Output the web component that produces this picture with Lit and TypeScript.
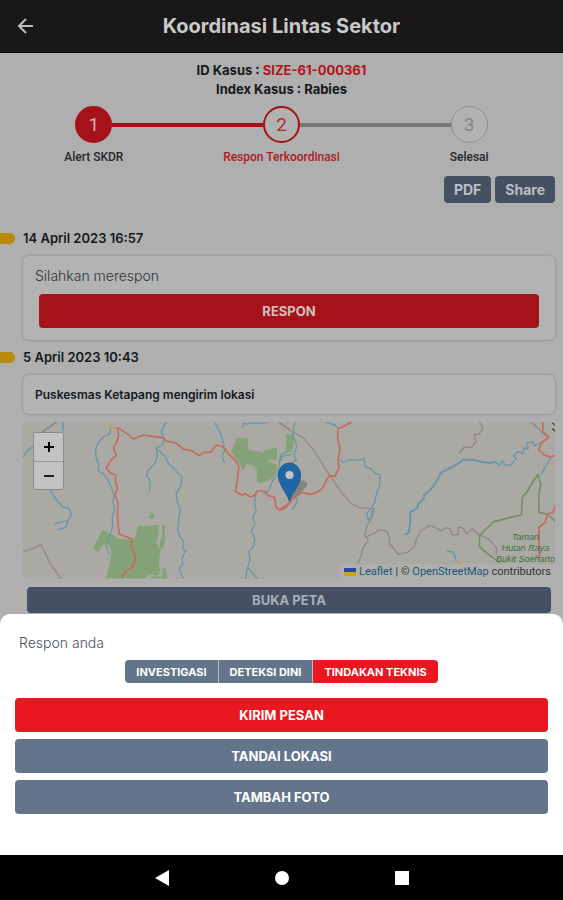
import { LitElement, html, css, svg } from "lit";
import { customElement, property, state } from "lit/decorators.js";
import { classMap } from "lit/directives/class-map.js";

const BLUE = "#6597a8";
const RED = "#c7695c";
const GREEN = "#83a277";
const GREY = "#8f8987";
const PARK = "#739068";

interface Line {
  c: string;
  d: string;
  w?: number;
}

const westLines: Line[] = [
  { c: BLUE, d: "M192 20L190 46M70 128L84 106L100 95M130 48L170 22" },
  { c: BLUE, d: "M333 40L330 58L312 66L296 84L288 104L290 128L298 150L296 168L312 176L326 196L334 214L344 240L340 262L346 284L338 306L340 330L334 352L328 376L320 392L328 416" },
  { c: BLUE, d: "M502 20L492 34L486 52L494 72L488 90L470 100L474 122L468 142L446 166L441 178L452 200L450 228" },
  { c: BLUE, d: "M476 104L496 124L508 146L528 166L548 188L544 212L530 236L534 262L542 286L538 310L534 346L540 362L552 380L550 400L558 408L548 430L550 450L540 460L550 490" },
  { c: BLUE, d: "M646 22L656 42L666 62L672 86L676 106L668 122L674 142" },
  { c: BLUE, d: "M730 38L734 24L744 28L752 22L760 27L770 22L782 26L802 22" },
  { c: BLUE, d: "M768 240L766 266L770 290L760 304L766 326L756 348L766 370L762 394L748 410L752 434L744 456L738 490M746 458L772 490" },
  { c: BLUE, d: "M152 224L164 246L190 276L208 280L216 298L206 316L166 326M206 318L198 338L176 344" },
  { c: BLUE, d: "M868 108L844 120L840 142L836 176L820 196L808 226L794 236" },
  { c: GREY, d: "M70 410L100 400L124 390L132 404L152 446L184 490" },
  { c: GREY, d: "M840 24L870 44M130 50L168 24" },
  { c: "#c59b5d", d: "M320 20L344 42L356 38", w: 5 },
  { c: RED, d: "M354 38L382 56L402 72L432 60L458 64L490 68L500 78L528 84L552 102L578 108L598 122L612 112L632 112L652 90L672 96L688 118L704 132L718 154L714 190L708 230L728 240L736 236L754 246L768 240L772 228L796 228L806 242L824 246L828 266L830 278L842 286L858 278L870 264", w: 5 },
  { c: RED, d: "M354 42L358 62L352 80L342 98L350 122L336 134L320 158L332 174L348 180L348 200L354 220L346 240L356 264L354 298L356 332L360 358L398 372L394 390L404 412L408 436L398 458L380 468L368 488", w: 5 },
];

const eastLines: Line[] = [
  { c: GREY, d: "M0 22L40 52L72 68L104 108L132 152L154 186L186 232L216 266L240 278L284 282" },
  { c: GREY, d: "M284 280L278 306L262 332L256 360L266 376L250 400L246 418L236 446M258 366L290 352L296 344L322 348L330 370L330 388L342 400L356 418L384 412L404 396L412 370L424 348L448 332L466 336L484 348L500 338L512 342L518 360L536 358L536 336L552 340L560 356L578 342L592 354L606 362L630 374L652 400L650 420" },
  { c: GREY, d: "M600 22L610 38L600 56L584 60L590 78L576 98L554 96L540 114M756 22L782 46L806 68" },
  { c: BLUE, d: "M136 20L166 30L176 40M182 132L188 142L214 134L240 136L254 130L258 156L276 162L286 176L302 180L300 214L290 240L286 262L270 286L262 296L266 314L276 306L278 288" },
  { c: BLUE, w: 6, d: "M378 358L388 352L392 326L392 292L412 280L418 266L434 250L434 238L450 228L466 208L476 190L484 174L510 160L530 150L550 134L580 134L604 140L632 144L644 140" },
  { c: BLUE, d: "M644 140L660 150L668 138L678 152L696 148L710 130L702 122L714 110L730 116L734 98L746 102L742 84L760 80L766 92L784 82M814 130L798 156L786 176M504 408L522 412L530 438" },
  { c: BLUE, d: "M46 22L40 60L52 92L44 120L50 136L28 150M0 138L10 124L36 118M54 250L48 270L38 284" },
  { c: PARK, w: 5, d: "M776 178L760 200L744 228L728 250L726 300L690 308L644 320L620 342L600 362L600 394L614 408L640 428L660 442M776 178L784 210L778 240L778 292L804 298L828 318" },
  { c: RED, w: 5, d: "M218 20L196 32L176 42L174 70L182 102L176 130L178 160L166 184L150 182L140 196L132 216L116 230L94 238L66 232L48 246L24 268L0 284" },
  { c: RED, w: 5, d: "M790 20L790 50L808 66L786 84L778 104L794 120L812 126L826 122M828 270L820 292L804 298L796 324L778 336L780 430" },
  { c: "#4a4846", w: 5, d: "M820 24L826 30M820 42L826 48" },
];

const drawLines = (lines: Line[]) =>
  lines.map((l) => svg`<path d=${l.d} stroke=${l.c} stroke-width=${l.w ?? 4} fill="none" stroke-linejoin="round" stroke-linecap="round"/>`);

@customElement("case-steps")
class CaseSteps extends LitElement {
  @property({ type: Number }) current = 2;
  @property({ attribute: false }) steps: string[] = [];

  static styles = css`
    :host { display: block; }
    .steps { display: grid; grid-template-columns: repeat(3, 1fr); list-style: none; margin: 0; padding: 0; font-family: Roboto, "Liberation Sans", sans-serif; }
    .step { display: flex; flex-direction: column; align-items: center; gap: 6px; font-size: 12px; line-height: 16px; color: #25282b; font-weight: 500; }
    .rail { display: flex; align-items: center; align-self: stretch; }
    .bar { flex: 1; height: 4px; }
    .done { background: #a50f16; }
    .todo { background: #777; }
    .dot { box-sizing: border-box; width: 37px; height: 37px; border-radius: 50%; border: 2px solid #a51219; background: #b2b2b2; display: grid; place-items: center; font-size: 19px; font-weight: 400; color: #b02a30; }
    .past .dot { background: #a51219; color: #c8b6b6; }
    .next .dot { border: 1px solid #8e8e8e; color: #858585; }
    .now { color: #ad1a24; }
  `;

  render() {
    const last = this.steps.length;
    return html`<ol class="steps">
      ${this.steps.map((label, i) => {
        const n = i + 1;
        const bar = (shown: boolean, done: boolean) => html`<span class=${classMap({ bar: true, done: shown && done, todo: shown && !done })}></span>`;
        return html`<li class=${classMap({ step: true, past: n < this.current, now: n === this.current, next: n > this.current })}>
          <div class="rail">
            ${bar(n > 1, n <= this.current)}<span class="dot">${n}</span>${bar(n < last, n < this.current)}
          </div>
          <span>${label}</span>
        </li>`;
      })}
    </ol>`;
  }
}

@customElement("case-map")
class CaseMap extends LitElement {
  static styles = css`
    :host { display: block; position: relative; height: 157px; overflow: hidden; border-radius: 4px; background: #aba9a4; }
    .canvas { display: block; width: 100%; height: 100%; }
    .place { font: italic 9px "Liberation Sans", sans-serif; fill: #35713a; }
    .zoom { position: absolute; top: 10px; left: 10px; display: flex; flex-direction: column; border: 1px solid #8a8a88; border-radius: 3px; overflow: hidden; }
    .zoom button { width: 29px; height: 28px; border: 0; padding: 0; background: #c2c2c2; display: grid; place-items: center; }
    .zoom button + button { border-top: 1px solid #999; }
    .credit { position: absolute; right: 0; bottom: 0; display: flex; align-items: center; gap: 3px; padding: 0 4px; background: #b0afad; font: 11px/15px Roboto, sans-serif; color: #333; white-space: nowrap; }
    a { color: #18577a; text-decoration: none; }
    .leaflet { display: flex; align-items: center; gap: 3px; }
  `;

  render() {
    return html`
      <svg class="canvas" viewBox="0 0 533 157" preserveAspectRatio="xMidYMid slice" role="img" aria-label="Peta lokasi">
        <g transform="translate(-23 -7) scale(.3333)">
          <g fill=${GREEN}>
            <path d="M712 70L744 70L746 104L790 112L806 102L832 98L832 134L800 136L832 150L832 170L820 190L784 206L772 198L772 164L760 150L740 148L732 166L716 140L694 110Z"/>
            <path d="M862 62L878 56L878 112L862 108Z"/>
            <path d="M416 334L476 330L478 354L470 384L484 408L478 440L482 474L474 482L446 478L440 484L410 470L404 430L404 374Z"/>
            <path d="M310 344L344 362L360 372L404 374L410 470L440 484L440 490L320 490L330 450L336 410L328 386L310 390L296 412L280 400Z"/>
            <path d="M488 330L496 330L496 382L490 400L480 404L482 378L488 368ZM490 460L498 462L504 490L454 490L456 484L488 484ZM456 292L464 296L462 314L446 308Z"/>
          </g>
          ${drawLines(westLines)}
        </g>
        <g transform="translate(257 -7) scale(.3333)">
          <path d="M20 58L44 60L40 104L20 110Z" fill=${GREEN}/>
          ${drawLines(eastLines)}
          <path d="M530 440L548 446" stroke="#c59b5d" stroke-width="5"/>
        </g>
        <g class="place" text-anchor="middle">
          <text x="503" y="118">Taman</text>
          <text x="503" y="129">Hutan Raya</text>
          <text x="503" y="140">Bukit Soeharto</text>
        </g>
        <path d="M268 78L284 65Q287 59 278 58Z" fill="#333" opacity=".3"/>
        <path d="M267 79C264 70 256 63 256 53A11 12 0 0 1 278 53C278 63 270 70 267 79Z" fill="#1e66a4" stroke="#1b588c"/>
        <circle cx="267" cy="53" r="4" fill="#c4c4c4"/>
      </svg>
      <div class="zoom">
        <button type="button" aria-label="Perbesar"><svg width="10" height="10"><path d="M5 0V10M0 5H10" stroke="#000" stroke-width="2"/></svg></button>
        <button type="button" aria-label="Perkecil"><svg width="10" height="10"><path d="M0 5H10" stroke="#222" stroke-width="2"/></svg></button>
      </div>
      <div class="credit">
        <a class="leaflet" href="#leaflet"><svg width="12" height="8"><path d="M0 0H12V4H0Z" fill="#2749a5"/><path d="M0 4H12V8H0Z" fill="#c4a800"/></svg>Leaflet</a>
        <span>| © <a href="#osm">OpenStreetMap</a> contributors</span>
      </div>`;
  }
}

@customElement("app-root")
class AppRoot extends LitElement {
  @state() private kind = "TINDAKAN TEKNIS";

  static styles = css`
    :host { display: flex; flex-direction: column; min-height: 100vh; font-family: Inter, "Open Sans", sans-serif; font-size: 13px; background: #000; }
    button { font: inherit; font-weight: 700; border: 0; margin: 0; padding: 0; cursor: pointer; }
    .screen { flex: 1; position: relative; overflow: hidden; background: #afafaf; color: #14181c; }
    .top { display: grid; grid-template-columns: 52px 1fr 52px; align-items: center; height: 52px; background: #191718; border-bottom: 1px solid #000; }
    .back { display: grid; place-items: center; height: 52px; background: none; }
    .title { margin: 0; font-size: 20px; line-height: 24px; font-weight: 700; text-align: center; color: #c9c9c9; }
    .case { padding: 8px 0 7px; text-align: center; font-weight: 700; line-height: 19px; }
    .case p { margin: 0; }
    .id { color: #b3121c; }
    .tools { display: flex; justify-content: flex-end; gap: 4px; padding: 11px 8px 0; }
    .tools button { height: 27px; padding: 0 10px; border-radius: 4px; font-size: 14px; background: #455162; color: #b9c0c9; }
    .log { padding: 26px 8px 0 0; }
    .when { display: flex; align-items: center; gap: 8px; margin: 0; font-size: 13px; line-height: 19px; font-weight: 600; }
    .when::before { content: ""; width: 15px; height: 11px; border-radius: 0 5px 5px 0; background: #b98a0c; }
    .entry { margin: 8px 0 8px 23px; }
    .card { border-radius: 6px; background: #b3b3b3; box-shadow: 0 0 3px #7d8484; }
    .ask { padding: 10px 16px 12px; }
    .ask p { margin: 0 0 8px -4px; font-size: 14px; line-height: 20px; font-weight: 300; color: #2f3338; }
    .wide { display: block; width: 100%; height: 34px; border-radius: 4px; }
    .ask .wide { background: #a51219; color: #cfc0c0; }
    .note { margin-bottom: 8px; padding: 0 12px; font-size: 12px; line-height: 39px; font-weight: 600; }
    .open { padding: 8px 4px 0; }
    .open .wide { height: 26px; background: #455162; color: #a9b0ba; }
    .sheet { position: absolute; left: 0; right: 0; bottom: 0; box-sizing: border-box; padding: 19px 15px 41px; border-radius: 10px 10px 0 0; background: #fff; color: #4a4f57; }
    .sheet h2 { margin: 0 4px 7px; font-size: 14px; line-height: 20px; font-weight: 300; }
    .kinds { display: flex; justify-content: center; margin-bottom: 15px; }
    .kinds button { height: 23px; padding: 0 11px; font-size: 11px; color: #fff; background: #64748b; }
    .kinds button + button { border-left: 1px solid #b4bcc8; }
    .kinds button:first-child { border-radius: 4px 0 0 4px; }
    .kinds button:last-child { border-radius: 0 4px 4px 0; }
    .kinds .on { background: #e91720; }
    .acts { display: flex; flex-direction: column; gap: 7px; }
    .acts .wide { background: #64748b; color: #fff; }
    .acts .main { background: #e91720; }
    .nav { display: flex; justify-content: center; height: 45px; background: #000; }
    .nav button { width: 120px; display: grid; place-items: center; background: none; }
  `;

  render() {
    const kinds = ["INVESTIGASI", "DETEKSI DINI", "TINDAKAN TEKNIS"];
    return html`
      <div class="screen">
        <header class="top">
          <button class="back" type="button" aria-label="Kembali">
            <svg width="16" height="16" viewBox="0 0 16 16" fill="none" stroke="#bdbdbd" stroke-width="2"><path d="M15 8H2M8 1L1 8L8 15"/></svg>
          </button>
          <h1 class="title">Koordinasi Lintas Sektor</h1>
        </header>
        <div class="case">
          <p>ID Kasus : <span class="id">SIZE-61-000361</span></p>
          <p>Index Kasus : Rabies</p>
        </div>
        <case-steps .steps=${["Alert SKDR", "Respon Terkoordinasi", "Selesai"]}></case-steps>
        <div class="tools"><button type="button">PDF</button><button type="button">Share</button></div>
        <main class="log">
          <h2 class="when">14 April 2023 16:57</h2>
          <section class="entry card ask">
            <p>Silahkan merespon</p>
            <button class="wide" type="button">RESPON</button>
          </section>
          <h2 class="when">5 April 2023 10:43</h2>
          <section class="entry">
            <div class="card note">Puskesmas Ketapang mengirim lokasi</div>
            <case-map></case-map>
            <div class="open"><button class="wide" type="button">BUKA PETA</button></div>
          </section>
        </main>
        <section class="sheet">
          <h2>Respon anda</h2>
          <div class="kinds">
            ${kinds.map((k) => html`<button type="button" class=${classMap({ on: k === this.kind })} aria-pressed=${k === this.kind} @click=${() => (this.kind = k)}>${k}</button>`)}
          </div>
          <div class="acts">
            <button class="wide main" type="button">KIRIM PESAN</button>
            <button class="wide" type="button">TANDAI LOKASI</button>
            <button class="wide" type="button">TAMBAH FOTO</button>
          </div>
        </section>
      </div>
      <nav class="nav">
        <button type="button" aria-label="Kembali"><svg width="14" height="16"><path d="M14 0V16L0 8Z" fill="#fff"/></svg></button>
        <button type="button" aria-label="Beranda"><svg width="14" height="14"><circle cx="7" cy="7" r="7" fill="#fff"/></svg></button>
        <button type="button" aria-label="Aplikasi terbaru"><svg width="14" height="14"><path d="M0 0H14V14H0Z" fill="#fff"/></svg></button>
      </nav>`;
  }
}
